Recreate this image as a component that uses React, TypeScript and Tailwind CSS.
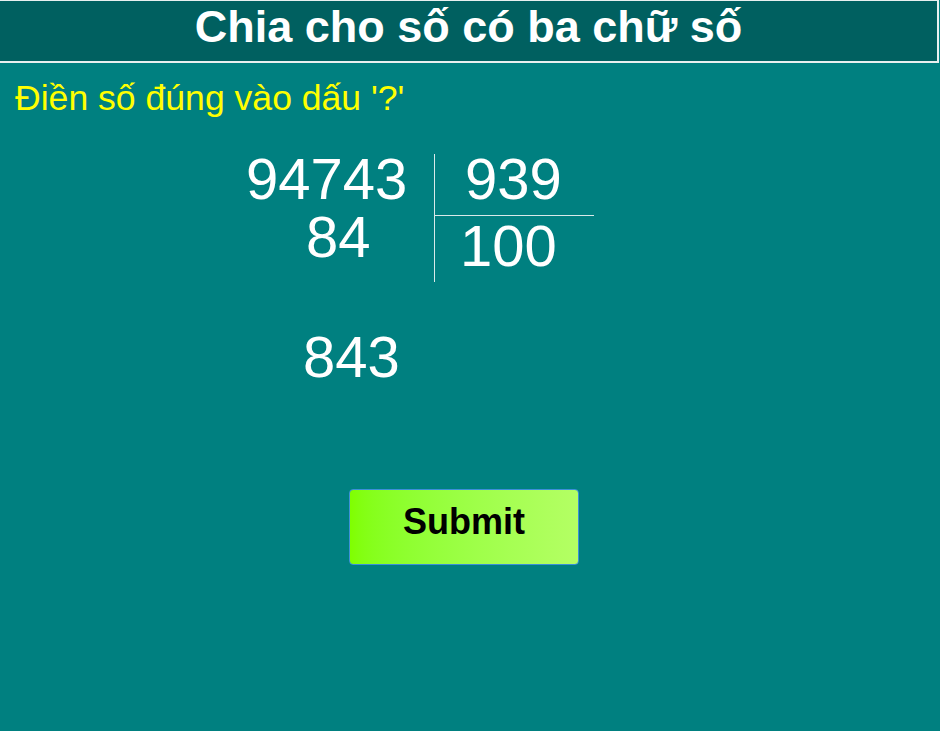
import React from "react";

const font = { fontFamily: '"Liberation Sans", Arial, sans-serif' };

export default function App() {
  return (
    <div className="w-[940px] h-[731px] bg-[#008080] overflow-hidden" style={font}>
      {/* Title bar */}
      <div className="w-[939px] h-[63px] bg-[#006060] border-t border-r-2 border-b-2 border-[#e8f0f0] flex items-center justify-center">
        <h1 className="text-white font-bold text-[45px] leading-none -mt-[10px]">Chia cho số có ba chữ số</h1>
      </div>

      {/* Prompt */}
      <div className="pl-[15px] pt-[15px] text-[#ffff00] text-[35.6px] leading-[40px]">Điền số đúng vào dấu '?'</div>

      {/* Long division */}
      <div className="flex mt-[36px] text-white text-[58px] leading-[58px]">
        <div className="w-[434px] shrink-0">
          <div className="pl-[246px] -mt-[4px] h-[58px]">94743</div>
          <div className="pl-[306px] h-[58px]">84</div>
          <div className="pl-[303px] mt-[62px] h-[58px]">843</div>
        </div>
        <div className="h-[128px] border-l border-[#d8eaea]">
          <div className="w-[159px] h-[66px] border-b border-[#d8eaea]">
            <div className="pl-[30px] -mt-[4px]">939</div>
          </div>
          <div className="pl-[25px] mt-[1px]">100</div>
        </div>
      </div>

      {/* Submit */}
      <div className="flex pl-[349px] mt-[103px]">
        <button className="w-[230px] h-[76px] rounded-[4px] border border-[#3b8fd9] bg-gradient-to-r from-[#80ff00] to-[#b4ff64] text-black font-bold text-[36px] leading-none pb-[10px]">
          Submit
        </button>
      </div>
    </div>
  );
}
